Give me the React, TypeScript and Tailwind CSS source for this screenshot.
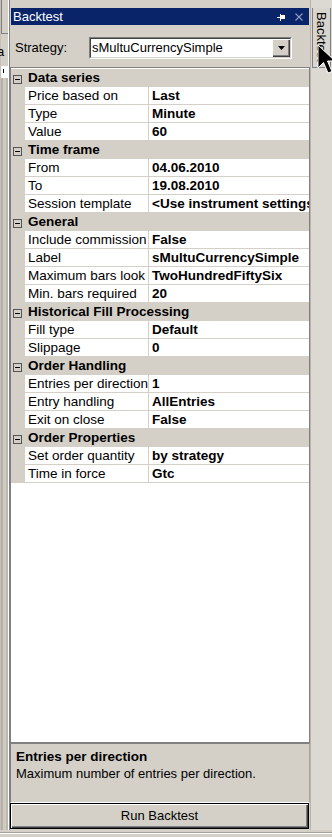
import React from 'react';

type Item = [string, string];

interface Section {
  title: string;
  items: Item[];
}

const SECTIONS: Section[] = [
  {
    title: 'Data series',
    items: [
      ['Price based on', 'Last'],
      ['Type', 'Minute'],
      ['Value', '60'],
    ],
  },
  {
    title: 'Time frame',
    items: [
      ['From', '04.06.2010'],
      ['To', '19.08.2010'],
      ['Session template', '<Use instrument settings>'],
    ],
  },
  {
    title: 'General',
    items: [
      ['Include commission', 'False'],
      ['Label', 'sMultuCurrencySimple'],
      ['Maximum bars look', 'TwoHundredFiftySix'],
      ['Min. bars required', '20'],
    ],
  },
  {
    title: 'Historical Fill Processing',
    items: [
      ['Fill type', 'Default'],
      ['Slippage', '0'],
    ],
  },
  {
    title: 'Order Handling',
    items: [
      ['Entries per direction', '1'],
      ['Entry handling', 'AllEntries'],
      ['Exit on close', 'False'],
    ],
  },
  {
    title: 'Order Properties',
    items: [
      ['Set order quantity', 'by strategy'],
      ['Time in force', 'Gtc'],
    ],
  },
];

const CollapseBox = () => (
  <svg width="9" height="9" viewBox="0 0 9 9" className="block">
    <rect x="0.5" y="0.5" width="8" height="8" fill="none" stroke="#555" />
    <path d="M2 4.5H7" stroke="#000" />
  </svg>
);

const PinIcon = () => (
  <svg width="9" height="8" viewBox="0 0 9 8" className="block">
    <path d="M0 4.5H3" stroke="#fff" />
    <path d="M3.5 1V8" stroke="#fff" />
    <rect x="4" y="2" width="4" height="4" fill="#fff" />
  </svg>
);

const CloseIcon = () => (
  <svg width="8" height="8" viewBox="0 0 8 8" className="block">
    <path d="M0.5 0.5L7.5 7.5M7.5 0.5L0.5 7.5" stroke="#8f9cc4" strokeWidth="1.1" />
  </svg>
);

const Cursor = () => (
  <svg width="20" height="32" viewBox="0 0 20 32" className="block">
    <path
      d="M1 1 L1 24 L6.5 18.5 L11 29 L15 27.5 L10.5 17 L18 17 Z"
      fill="#000"
      stroke="#fff"
      strokeWidth="1"
    />
  </svg>
);

const PropertyGrid = () => (
  <div className="h-[676px] border border-[#808080] bg-white pt-[1px] overflow-hidden">
    {SECTIONS.map((section) => (
      <div key={section.title}>
        <div className="flex h-[18px] items-center bg-[#d4d0c8]">
          <div className="w-[14px] pl-[2px] pt-[2px]">
            <CollapseBox />
          </div>
          <span className="pl-[3px] font-bold leading-[18px] whitespace-nowrap">{section.title}</span>
        </div>
        {section.items.map(([name, value]) => (
          <div key={name} className="flex h-[18px]">
            <div className="w-[14px] bg-[#d4d0c8]" />
            <div className="flex flex-1 border-b border-[#d4d0c8] min-w-0">
              <div className="w-[124px] shrink-0 border-r border-[#d4d0c8] pl-[3px] leading-[17px] whitespace-nowrap overflow-hidden">
                {name}
              </div>
              <div className="flex-1 pl-[3px] font-bold leading-[17px] whitespace-nowrap overflow-hidden">
                {value}
              </div>
            </div>
          </div>
        ))}
      </div>
    ))}
  </div>
);

const LeftEdge = () => (
  <div className="flex w-[10px] h-full bg-[#d4d0c8]">
    <div className="w-[1px] bg-[#c4c0b8]" />
    <div className="flex flex-col w-[7px]">
      <div className="h-[33px] border-l border-[#808080]" />
      <div className="h-[1px] bg-[#808080]" />
      <div className="h-[13px]" />
      <div className="h-[10px] -ml-[4px] text-[13px] leading-[10px] overflow-hidden">a</div>
      <div className="h-[9px]" />
      <div className="flex h-[12px] bg-white pl-[2px] pt-[3px]">
        <div className="w-[1px] h-[4px] bg-black" />
      </div>
      <div className="flex-1 flex">
        <div className="w-[2px] bg-[#b4b0a8]" />
        <div className="w-[3px] bg-[#cfcbc3]" />
        <div className="w-[2px] bg-[#bcb8b0]" />
      </div>
    </div>
    <div className="w-[1px] bg-white" />
    <div className="w-[1px] bg-[#808080]" />
  </div>
);

const RightEdge = () => (
  <div className="w-[22px] h-full bg-[#dcd9d3] border-l border-[#b8b4ac]">
    <div className="mt-[8px] ml-[1px] w-[19px] h-[60px] border border-t-0 border-[#808080] bg-[#d8d5ce] pt-[4px] flex justify-center">
      <span className="[writing-mode:vertical-rl] text-[13px] leading-[15px] whitespace-nowrap">Backtest</span>
    </div>
  </div>
);

export default function App() {
  return (
    <div className="relative w-[332px] h-[837px] overflow-hidden bg-[#d4d0c8] text-black text-[13.5px] font-['Liberation_Sans',Arial,sans-serif]">
      <div className="flex h-[830px]">
        <LeftEdge />
        <div className="w-[300px] flex flex-col">
          <div className="h-[8px]" />
          <div className="mx-[1px] h-[17px] bg-[#0a246a] flex items-center pl-[2px] pr-[6px]">
            <span className="text-white text-[13px] leading-[17px] flex-1">Backtest</span>
            <div className="flex items-center gap-[9px]">
              <PinIcon />
              <CloseIcon />
            </div>
          </div>
          <div className="h-[42px] flex items-start pt-[12px] pl-[5px]">
            <span className="w-[74px] text-[13px] leading-[22px]">Strategy:</span>
            <div className="w-[203px] h-[22px] border border-t-[#808080] border-l-[#808080] border-b-white border-r-white">
              <div className="h-full flex items-center border border-t-[#404040] border-l-[#404040] border-b-[#d4d0c8] border-r-[#d4d0c8] bg-white">
                <span className="flex-1 pl-[1px] text-[13px] leading-[18px] whitespace-nowrap overflow-hidden">sMultuCurrencySimple</span>
                <div className="w-[18px] h-[18px] bg-[#d4d0c8] flex items-center justify-center shadow-[inset_1px_1px_0_#fff,inset_-1px_-1px_0_#404040,inset_-2px_-2px_0_#808080]">
                  <svg width="7" height="4" viewBox="0 0 7 4" className="block">
                    <path d="M0 0H7L3.5 4Z" fill="#000" />
                  </svg>
                </div>
              </div>
            </div>
          </div>
          <PropertyGrid />
          <div className="h-[60px] border border-[#808080] border-b-white border-r-[#a8a49c] pl-[5px] pt-[4px]">
            <div className="font-bold leading-[17px]">Entries per direction</div>
            <div className="leading-[17px] text-[13px]">Maximum number of entries per direction.</div>
          </div>
          <div className="h-[26px] mr-[1px] border border-black">
            <div className="h-full flex items-center justify-center text-[13px] bg-[#d4d0c8] shadow-[inset_1px_1px_0_#fff,inset_-1px_-1px_0_#404040,inset_-2px_-2px_0_#808080]">
              Run Backtest
            </div>
          </div>
        </div>
        <RightEdge />
      </div>
      <div className="h-[7px] flex flex-col">
        <div className="h-[2px]" />
        <div className="h-[1px] bg-[#a8a49c]" />
        <div className="h-[1px] bg-white" />
        <div className="h-[3px] bg-[#d4d0c8]" />
      </div>
      <div className="absolute left-[317px] top-[44px]">
        <Cursor />
      </div>
    </div>
  );
}
